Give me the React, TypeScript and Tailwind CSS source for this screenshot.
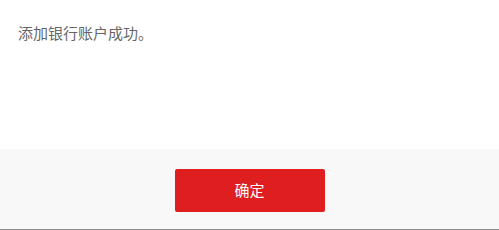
export default function App() {
  return (
    <div
      className="w-[499px] h-[230px] bg-white flex flex-col"
      style={{ fontFamily: '"Microsoft YaHei", "Noto Sans CJK SC", sans-serif' }}
    >
      <div className="h-[149px] px-[18px] pt-[22px]">
        <p className="text-[15px] leading-[22px] text-[#666666]">添加银行账户成功。</p>
      </div>
      <div className="flex-1 bg-[#f8f8f8] flex justify-center pt-[20px] border-b border-[#8a8a8a]">
        <button className="w-[150px] h-[43px] rounded-[2px] bg-[#df1f1f] text-white text-[15px]">
          确定
        </button>
      </div>
    </div>
  );
}
